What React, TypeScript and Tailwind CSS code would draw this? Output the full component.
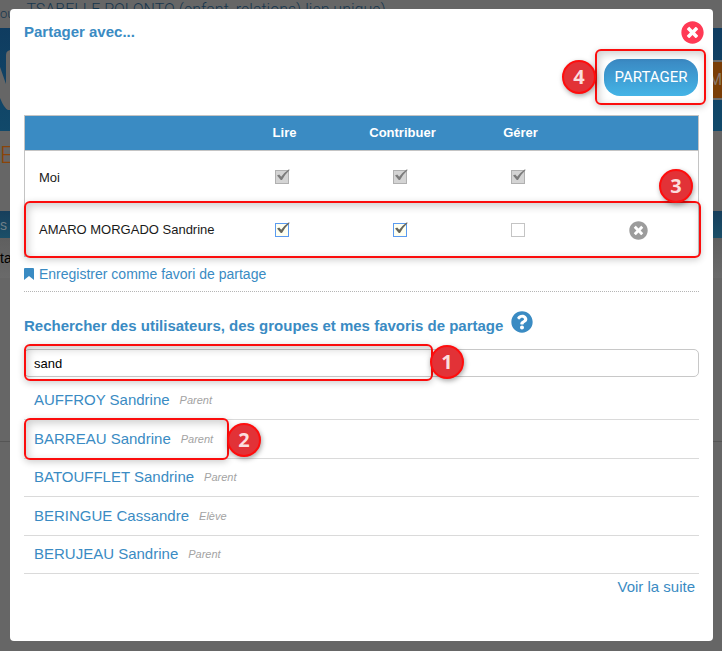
import type { ReactNode } from 'react'
import { FaBookmark, FaQuestionCircle, FaTimesCircle } from 'react-icons/fa'

function Step({ n, className }: { n: number; className: string }) {
  return (
    <span
      className={`absolute z-20 flex size-[34px] items-center justify-center rounded-full border-2 border-[#ff0d0d] bg-[#e23237] font-['Open_Sans',sans-serif] text-xl font-bold text-[#fbdede] shadow-[1px_2px_5px_rgba(0,0,0,0.35)] ${className}`}
    >
      {n}
    </span>
  )
}

function Frame({ className }: { className: string }) {
  return (
    <span
      className={`pointer-events-none absolute z-10 rounded-md border-2 border-[#fb0d0d] shadow-[0_2px_7px_rgba(0,0,0,0.2),inset_2px_3px_8px_rgba(0,0,0,0.2)] ${className}`}
    />
  )
}

function Check({ label, checked, disabled }: { label: string; checked?: boolean; disabled?: boolean }) {
  return (
    <label className="relative mx-auto block h-[14px] w-5">
      <input
        type="checkbox"
        aria-label={label}
        defaultChecked={checked}
        disabled={disabled}
        className="peer block size-[14px] appearance-none border border-[#c4c4c4] bg-white checked:border-[#5b9bf0] checked:bg-[#fffff0] disabled:border-[#b0b0b0] disabled:bg-[#d4d4d4]"
      />
      <svg
        viewBox="0 0 14 14"
        className="pointer-events-none absolute -top-px left-px hidden size-[14px] peer-checked:block"
        fill={disabled ? '#7c7c7c' : '#66665c'}
        aria-hidden="true"
      >
        <path d="M1 6.6 3.2 5.4 5.2 7.8Q8 3.6 13 .2L13.6 .9Q9.2 5 6 11H4.8Z" />
      </svg>
    </label>
  )
}

const rights = ['Lire', 'Contribuer', 'Gérer']

function ShareRow({ name, values, disabled, children }: { name: string; values: boolean[]; disabled?: boolean; children?: ReactNode }) {
  return (
    <tr className="h-[53px]">
      <td className="pl-[14px]">{name}</td>
      {values.map((v, i) => (
        <td key={rights[i]}>
          <Check label={`${rights[i]} - ${name}`} checked={v} disabled={disabled} />
        </td>
      ))}
      <td className="text-center">{children}</td>
    </tr>
  )
}

const results = [
  { name: 'AUFFROY Sandrine', role: 'Parent' },
  { name: 'BARREAU Sandrine', role: 'Parent', step: true },
  { name: 'BATOUFFLET Sandrine', role: 'Parent' },
  { name: 'BERINGUE Cassandre', role: 'Elève' },
  { name: 'BERUJEAU Sandrine', role: 'Parent' },
]

function PageBehind() {
  return (
    <div aria-hidden="true" className="absolute inset-0 overflow-hidden text-[13px]">
      <div className="flex h-7 items-start gap-3 whitespace-nowrap font-['Roboto',sans-serif] text-[#16364e]">
        <span className="pt-1 font-light">ou</span>
        <span className="text-base font-light leading-5">
          TSABELLE POLONTO (enfant, relations) lien unique)
        </span>
      </div>
      <div className="flex h-[103px] items-center justify-between bg-linear-to-b from-[#0f3c60] to-[#11496a]">
        <svg viewBox="0 0 12 60" className="h-[60px] w-3" fill="#666">
          <path d="M0 17 6 34V5Q6 0 12 0V60H8Q4 58 0 48Z" />
        </svg>
        <span className="flex h-10 w-4 items-center justify-end border-y-2 border-[#6b6b6b] bg-[#7a3d06] text-base text-[#8a7a70]">M</span>
      </div>
      <div className="flex h-20 items-start pt-2 font-['Roboto',sans-serif] text-2xl font-light text-[#8c4408]">EN</div>
      <div className="flex h-[27px] items-center bg-linear-to-b from-[#173f5c] to-[#1b4f68] text-sm text-[#6f7f88]">s c</div>
      <div className="flex h-10 items-center bg-linear-to-b from-[#5f5f5f] to-[#6a6a6a] text-sm text-black">ta</div>
      <div className="h-[164px] border-b border-[#555]" />
    </div>
  )
}

export default function App() {
  return (
    <div className="relative min-h-screen bg-[#666] pt-[9px] pr-[9px] pb-[10px] pl-[10px] font-['Liberation_Sans',Arial,sans-serif]">
      <PageBehind />
      <main role="dialog" aria-label="Partager avec..." className="relative min-h-[632px] rounded bg-white px-[14px] pt-3 text-[13px] text-[#1a1a1a]">
        <header className="flex h-[22px] items-center justify-between">
          <h1 className="text-[15px] font-bold text-[#3a8bc3]">Partager avec...</h1>
          <button type="button" aria-label="Fermer" className="-mr-[5px] rounded-full text-[#ff3a55]">
            <FaTimesCircle className="size-[23px]" />
          </button>
        </header>

        <div className="mt-4 flex justify-end pr-px">
          <div className="relative">
            <button
              type="button"
              className="block h-[37px] w-[94px] rounded-2xl bg-linear-to-b from-[#3a88c2] to-[#44b4e6] text-center font-['Roboto',sans-serif] text-[15px] text-white"
            >
              PARTAGER
            </button>
            <Frame className="-top-[10px] -right-2 -bottom-[9px] -left-[9px]" />
            <Step n={4} className="top-px -left-[42px]" />
          </div>
        </div>

        <div className="relative mt-[19px]">
          <table className="w-full table-fixed border-collapse border border-[#c4c4c4]">
            <thead>
              <tr className="h-[35px] border-b border-[#c4c4c4] bg-[#3a8bc3] text-white">
                <th aria-label="Nom" />
                {rights.map((r) => (
                  <th key={r} className="w-[118px] font-bold">{r}</th>
                ))}
                <th aria-label="Retirer" className="w-[119px]" />
              </tr>
            </thead>
            <tbody>
              <ShareRow name="Moi" values={[true, true, true]} disabled />
              <ShareRow name="AMARO MORGADO Sandrine" values={[true, true, false]}>
                <button type="button" aria-label="Retirer" className="align-middle text-[#9c9c9c]">
                  <FaTimesCircle className="size-[19px]" />
                </button>
              </ShareRow>
            </tbody>
          </table>
          <Frame className="-right-0.5 -bottom-px left-0 h-[57px]" />
          <Step n={3} className="right-[6px] bottom-[54px]" />
        </div>

        <div className="flex h-[35px] items-center border-b border-dotted border-[#b5b5b5]">
          <a href="#favori" className="flex items-center gap-[5px] text-sm text-[#3a8bc3]">
            <svg viewBox="0 0 10 12" className="h-3 w-[10px]" fill="currentColor" aria-hidden="true">
              <path d="M0 1Q0 0 1 0H9Q10 0 10 1V12L5 8 0 12Z" />
            </svg>
            Enregistrer comme favori de partage
          </a>
        </div>

        <div className="mt-[17px] flex h-[34px] items-center gap-2 text-[#3a8bc3]">
          <label htmlFor="search" className="text-[15px] font-bold">
            Rechercher des utilisateurs, des groupes et mes favoris de partage
          </label>
          <FaQuestionCircle className="mb-[9px] size-[22px] shrink-0" />
        </div>

        <div className="relative mt-[6px]">
          <input
            id="search"
            type="text"
            defaultValue="sand"
            className="block h-7 w-full rounded-[5px] border border-[#c8c8c8] bg-white px-[9px] text-[13px] text-black outline-none"
          />
          <Frame className="-top-[5px] -bottom-1 left-0 w-[409px]" />
          <Step n={1} className="-top-1 left-[406px]" />
        </div>

        <ul className="mt-[5px]">
          {results.map((r) => (
            <li key={r.name} className="relative flex h-[38px] items-center border-b border-[#dadada] pl-[10px] even:h-[39px]">
              <a href="#resultat" className="text-[15px] text-[#3a8bc3]">{r.name}</a>
              <em className="ml-[10px] text-[11px] text-[#a3a3a3]">{r.role}</em>
              {r.step && (
                <>
                  <Frame className="-top-[2px] -bottom-[2px] left-0 w-[205px]" />
                  <Step n={2} className="top-[3px] left-[203px]" />
                </>
              )}
            </li>
          ))}
        </ul>
        <div className="flex h-[26px] items-center justify-end pr-1">
          <a href="#suite" className="text-[15px] text-[#3a8bc3]">Voir la suite</a>
        </div>
      </main>
    </div>
  )
}
